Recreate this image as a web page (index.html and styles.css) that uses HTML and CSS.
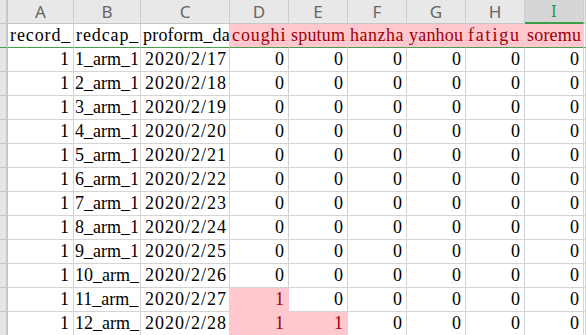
FILE: index.html
```html
<!DOCTYPE html>
<html>
<head>
<meta charset="utf-8">
<link rel="stylesheet" href="styles.css">
</head>
<body>
<div class="sheet">
  <div class="c corner"></div>
  <div class="c ch">A</div><div class="c ch">B</div><div class="c ch">C</div><div class="c ch">D</div><div class="c ch">E</div><div class="c ch">F</div><div class="c ch">G</div><div class="c ch">H</div><div class="c ch sel">I</div><div class="c ch"></div>

  <div class="c rh frz"></div>
  <div class="c lbl wide frz">record_</div><div class="c lbl wide frz">redcap_</div><div class="c lbl frz">proform_da</div><div class="c lbl wide frz bad">coughi</div><div class="c lbl frz bad">sputum</div><div class="c lbl mid frz bad">hanzha</div><div class="c lbl frz bad">yanhou</div><div class="c lbl xwide frz bad">fatigu</div><div class="c lbl frz bad">soremu</div><div class="c frz"></div>

  <div class="c rh"></div><div class="c num">1</div><div class="c txt">1_arm_1</div><div class="c date">2020/2/17</div><div class="c num">0</div><div class="c num">0</div><div class="c num">0</div><div class="c num">0</div><div class="c num">0</div><div class="c num">0</div><div class="c"></div>
  <div class="c rh"></div><div class="c num">1</div><div class="c txt">2_arm_1</div><div class="c date">2020/2/18</div><div class="c num">0</div><div class="c num">0</div><div class="c num">0</div><div class="c num">0</div><div class="c num">0</div><div class="c num">0</div><div class="c"></div>
  <div class="c rh"></div><div class="c num">1</div><div class="c txt">3_arm_1</div><div class="c date">2020/2/19</div><div class="c num">0</div><div class="c num">0</div><div class="c num">0</div><div class="c num">0</div><div class="c num">0</div><div class="c num">0</div><div class="c"></div>
  <div class="c rh"></div><div class="c num">1</div><div class="c txt">4_arm_1</div><div class="c date">2020/2/20</div><div class="c num">0</div><div class="c num">0</div><div class="c num">0</div><div class="c num">0</div><div class="c num">0</div><div class="c num">0</div><div class="c"></div>
  <div class="c rh"></div><div class="c num">1</div><div class="c txt">5_arm_1</div><div class="c date">2020/2/21</div><div class="c num">0</div><div class="c num">0</div><div class="c num">0</div><div class="c num">0</div><div class="c num">0</div><div class="c num">0</div><div class="c"></div>
  <div class="c rh"></div><div class="c num">1</div><div class="c txt">6_arm_1</div><div class="c date">2020/2/22</div><div class="c num">0</div><div class="c num">0</div><div class="c num">0</div><div class="c num">0</div><div class="c num">0</div><div class="c num">0</div><div class="c"></div>
  <div class="c rh"></div><div class="c num">1</div><div class="c txt">7_arm_1</div><div class="c date">2020/2/23</div><div class="c num">0</div><div class="c num">0</div><div class="c num">0</div><div class="c num">0</div><div class="c num">0</div><div class="c num">0</div><div class="c"></div>
  <div class="c rh"></div><div class="c num">1</div><div class="c txt">8_arm_1</div><div class="c date">2020/2/24</div><div class="c num">0</div><div class="c num">0</div><div class="c num">0</div><div class="c num">0</div><div class="c num">0</div><div class="c num">0</div><div class="c"></div>
  <div class="c rh"></div><div class="c num">1</div><div class="c txt">9_arm_1</div><div class="c date">2020/2/25</div><div class="c num">0</div><div class="c num">0</div><div class="c num">0</div><div class="c num">0</div><div class="c num">0</div><div class="c num">0</div><div class="c"></div>
  <div class="c rh"></div><div class="c num">1</div><div class="c txt">10_arm_</div><div class="c date">2020/2/26</div><div class="c num">0</div><div class="c num">0</div><div class="c num">0</div><div class="c num">0</div><div class="c num">0</div><div class="c num">0</div><div class="c"></div>
  <div class="c rh"></div><div class="c num">1</div><div class="c txt">11_arm_</div><div class="c date">2020/2/27</div><div class="c num bad">1</div><div class="c num">0</div><div class="c num">0</div><div class="c num">0</div><div class="c num">0</div><div class="c num">0</div><div class="c"></div>
  <div class="c rh"></div><div class="c num">1</div><div class="c txt">12_arm_</div><div class="c date">2020/2/28</div><div class="c num bad">1</div><div class="c num bad">1</div><div class="c num">0</div><div class="c num">0</div><div class="c num">0</div><div class="c num">0</div><div class="c"></div>
</div>
</body>
</html>
```
FILE: styles.css
```css
html, body {
  margin: 0;
  padding: 0;
  background: #ffffff;
  overflow: hidden;
}

.sheet {
  display: grid;
  grid-template-columns: 8px 66px 67px 89px repeat(6, 59px) 1fr;
  grid-auto-rows: 24px;
  width: 586px;
  height: 335px;
  overflow: hidden;
}

.c {
  box-sizing: border-box;
  border-right: 1px solid #d4d4d4;
  border-bottom: 1px solid #d4d4d4;
  font-family: "Liberation Serif", "Times New Roman", serif;
  font-size: 18px;
  line-height: 23px;
  color: #000000;
  white-space: nowrap;
  overflow: hidden;
}

.corner,
.rh {
  background: #e6e6e6;
  border-right: 2px solid #c8c8c8;
  border-bottom-color: #c8c8c8;
}

.ch {
  background: #e8e8e8;
  border-right-color: #cdcdcd;
  border-bottom-color: #c6c6c6;
  font-family: "Noto Sans", "Liberation Sans", sans-serif;
  font-size: 17px;
  color: #666666;
  text-align: center;
  line-height: 23px;
}

.ch.sel {
  background: #d6d6d6;
  color: #2f9a3f;
  border-bottom: 2px solid #3f9f48;
  line-height: 22px;
}

.lbl {
  padding-left: 2px;
  letter-spacing: 0.2px;
}

.lbl.mid {
  letter-spacing: 0.5px;
}

.lbl.wide {
  letter-spacing: 0.9px;
}

.lbl.xwide {
  letter-spacing: 1.8px;
}

.txt {
  padding-left: 1px;
}

.date {
  padding-left: 4px;
  letter-spacing: 1px;
}

.num {
  text-align: right;
  padding-right: 4px;
}

.frz {
  border-bottom: 1px solid #4a9f4f;
}

.bad {
  background: #ffc7ce;
  color: #9c0006;
  border-right-color: #ffc7ce;
}

.num.bad {
  border-bottom-color: #ffc7ce;
}
```
